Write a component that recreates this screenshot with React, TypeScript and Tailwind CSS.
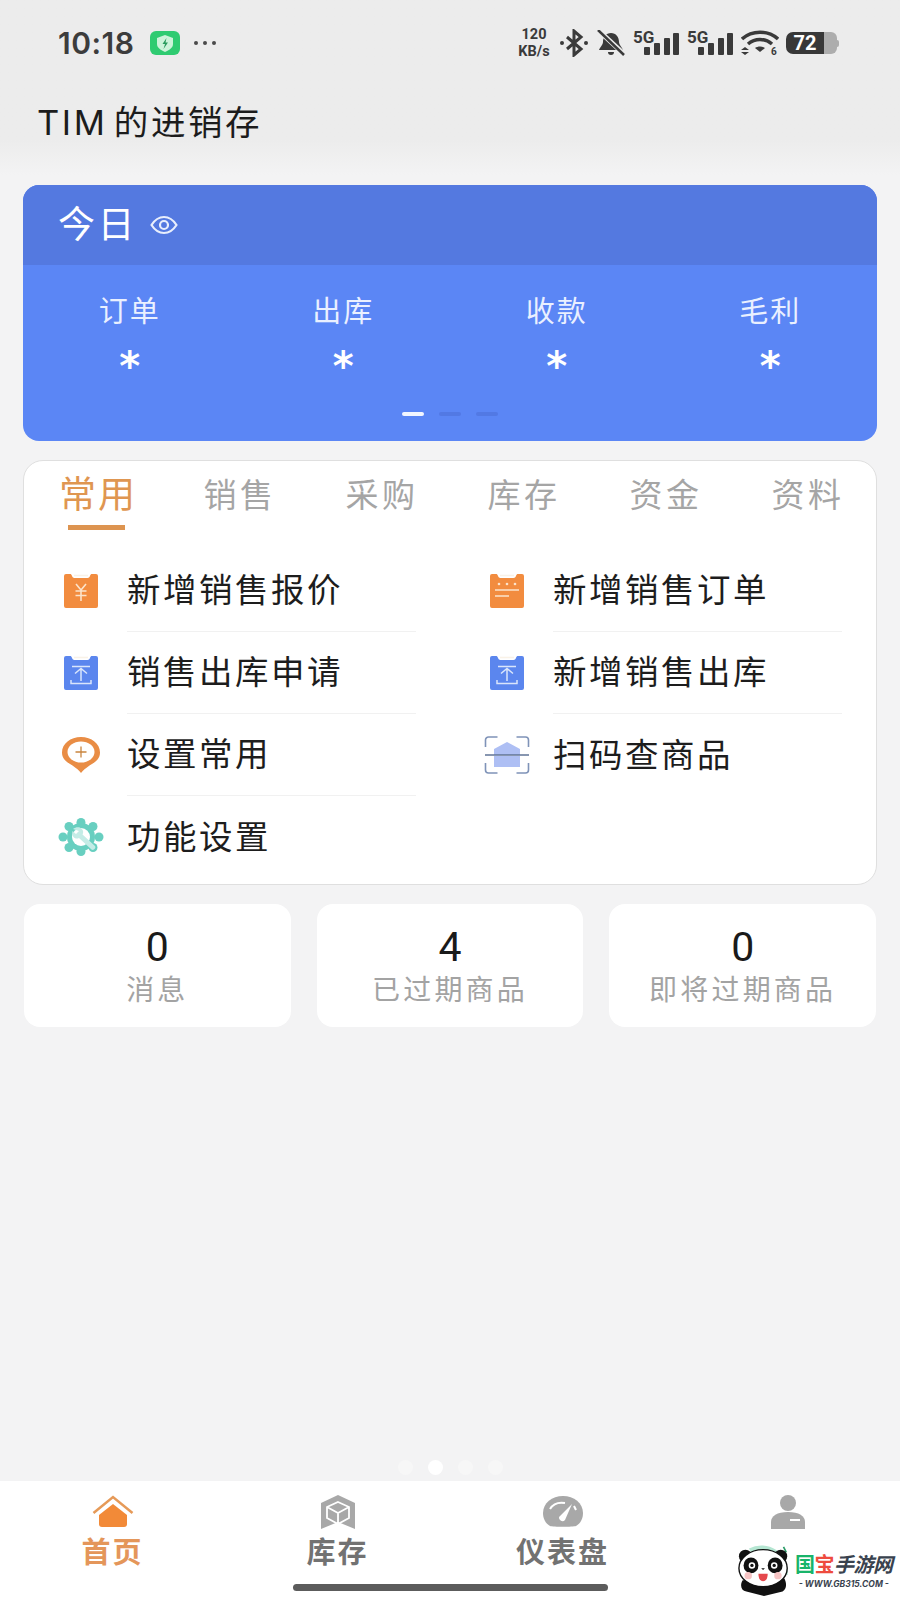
import React from "react";

const cjk = "font-['Inter','Noto_Sans_CJK_SC',sans-serif]";

const tabs = ["常用", "销售", "采购", "库存", "资金", "资料"];
const today = ["订单", "出库", "收款", "毛利"];

const ClipBoard: React.FC<{ color: string; children: React.ReactNode }> = ({ color, children }) => (
  <svg width="36" height="36" viewBox="0 0 36 36">
    <path d="M1 3a2 2 0 0 1 2-2h4c1 0 1.500.6 2 2 .5 1.300 1.200 2 2.500 2h13c1.300 0 2-.7 2.500-2 .5-1.400 1-2 2-2h4a2 2 0 0 1 2 2v30a2 2 0 0 1-2 2H3a2 2 0 0 1-2-2z" fill={color} />
    <path d="M11 2.500h14" stroke="#f6ead8" strokeWidth="1.500" opacity=".6" />
    {children}
  </svg>
);

const YenIcon = () => (
  <ClipBoard color="#f28c3f">
    <path d="M13 11l5 6 5-6M12.500 18h11M12.500 22.500h11M18 17v11" stroke="#fbe3cb" strokeWidth="1.600" fill="none" />
  </ClipBoard>
);

const ListIcon = () => (
  <ClipBoard color="#f28c3f">
    <circle cx="10" cy="11" r="1.300" fill="#fbe3cb" />
    <circle cx="18" cy="11" r="1.300" fill="#fbe3cb" />
    <circle cx="26" cy="11" r="1.300" fill="#fbe3cb" />
    <path d="M6 17h24M6 23h14" stroke="#fbe3cb" strokeWidth="1.600" fill="none" />
  </ClipBoard>
);

const OutIcon = () => (
  <ClipBoard color="#5b86ee">
    <path d="M9 11.500h18M18 13v13M12 18.500l6-5 6 5M8 25v3.500h20V25" stroke="#d9e5fb" strokeWidth="1.500" fill="none" />
  </ClipBoard>
);

const PinIcon = () => (
  <svg width="38" height="36" viewBox="0 0 38 36">
    <path d="M19 36c-1.500-2.500-5-5-8.500-7.500C4.500 25 0 22 0 15.500 0 6.500 8.500 0 19 0s19 6.500 19 15.500c0 6.500-4.500 9.500-10.500 13C24 31 20.500 33.500 19 36z" fill="#e98d45" />
    <ellipse cx="19" cy="15" rx="13.500" ry="10.500" fill="#fff" />
    <path d="M19 9.500v11M13.500 15h11" stroke="#c9853f" strokeWidth="1.300" />
  </svg>
);

const ScanIcon = () => (
  <svg width="46" height="38" viewBox="0 0 46 38">
    <path d="M1.500 11V4a3 3 0 0 1 3-3h9M32.500 1h9a3 3 0 0 1 3 3v7M1.500 27v7a3 3 0 0 0 3 3h9M32.500 37h9a3 3 0 0 0 3-3v-7" fill="none" stroke="#7f93b8" strokeWidth="1.600" />
    <path d="M10 13l13-7 13 7v6H10zM10 20h26v11H10z" fill="#aebff4" />
    <path d="M1 19h44" stroke="#5f7396" strokeWidth="1.400" />
  </svg>
);

const GearIcon = () => (
  <svg width="46" height="38" viewBox="0 0 46 38">
    <g fill="#68cfc0">
      <circle cx="23" cy="19" r="14" />
      <circle cx="23" cy="4.500" r="4.500" />
      <circle cx="23" cy="33.500" r="4.500" />
      <circle cx="5" cy="19" r="4.500" />
      <circle cx="41" cy="19" r="4.500" />
      <circle cx="11" cy="8.500" r="4.500" />
      <circle cx="35" cy="8.500" r="4.500" />
      <circle cx="11" cy="29.500" r="4.500" />
      <circle cx="35" cy="29.500" r="4.500" />
    </g>
    <circle cx="23" cy="19" r="9" fill="#fff" />
    <path d="M15 11c3-2.500 7-2.500 9 0 1.500 2 1.500 3.500.5 5.500L37 28c1.500 2-1.500 5-3.500 3.500L21 20c-2 1-4.500.5-5.500-1-1.500-2-1.500-4-1-6l3.500 3 3-3z" fill="#c4ece6" />
  </svg>
);

const actions = [
  { label: "新增销售报价", icon: <YenIcon />, line: true },
  { label: "新增销售订单", icon: <ListIcon />, line: true },
  { label: "销售出库申请", icon: <OutIcon />, line: true },
  { label: "新增销售出库", icon: <OutIcon />, line: true },
  { label: "设置常用", icon: <PinIcon />, line: true },
  { label: "扫码查商品", icon: <ScanIcon />, line: false },
  { label: "功能设置", icon: <GearIcon />, line: false },
];

const stats = [
  { value: "0", label: "消息" },
  { value: "4", label: "已过期商品" },
  { value: "0", label: "即将过期商品" },
];

const Signal = () => (
  <div className="flex w-[47px] items-start">
    <span className="-mr-[10px] text-[17px] leading-[13px] font-bold text-[#3a3a3a] font-['Roboto',sans-serif]">5G</span>
    <svg width="35" height="22" viewBox="0 0 35 22" className="mt-[2px]">
      <g fill="#3a3a3a">
        <rect x="0" y="14" width="6" height="8" rx="1" />
        <rect x="10" y="10" width="6" height="12" rx="1" />
        <rect x="20" y="5" width="6" height="17" rx="1" />
        <rect x="29" y="0" width="6" height="22" rx="1" />
      </g>
    </svg>
  </div>
);

const StatusBar = () => (
  <div className="flex h-[86px] items-center justify-between pl-[58px] pr-[61px]">
    <div className="flex items-center">
      <span className="w-[92px] text-[30px] font-semibold tracking-[0.5px] text-[#3c3c3c] font-['Inter',sans-serif]">10:18</span>
      <svg width="30" height="24" viewBox="0 0 30 24">
        <rect width="30" height="24" rx="6" fill="#2fcb71" />
        <path d="M15 4l8 3v6c0 4-4 6-8 8-4-2-8-4-8-8V7z" fill="#cdf3da" />
        <path d="M16.500 7l-4 6h2.500l-1.500 5 4.500-6.500h-2.500z" fill="#2a9b5d" />
      </svg>
      <div className="ml-[14px] flex gap-[5px]">
        <span className="h-[4px] w-[4px] rounded-full bg-[#4a4a4a]" />
        <span className="h-[4px] w-[4px] rounded-full bg-[#4a4a4a]" />
        <span className="h-[4px] w-[4px] rounded-full bg-[#4a4a4a]" />
      </div>
    </div>
    <div className="flex items-center gap-[7px]">
      <div className="flex w-[36px] flex-col items-center leading-none font-bold text-[#3a3a3a] font-['Roboto',sans-serif]">
        <span className="text-[14.500px] leading-[17px]">120</span>
        <span className="text-[14.500px] leading-[17px]">KB/s</span>
      </div>
      <svg width="30" height="28" viewBox="0 0 30 28">
        <path d="M8 8l14 12-7 6V2l7 6L8 20" fill="none" stroke="#3a3a3a" strokeWidth="3" />
        <circle cx="3" cy="14" r="2" fill="#3a3a3a" />
        <circle cx="27" cy="14" r="2" fill="#3a3a3a" />
      </svg>
      <svg width="30" height="26" viewBox="0 0 30 26">
        <path d="M15 3c5 0 8 4 8 9 0 3 3 5 4 8H3c1-3 4-5 4-8 0-5 3-9 8-9z" fill="#3a3a3a" />
        <path d="M12 22h6a3 3 0 0 1-6 0z" fill="#3a3a3a" />
        <path d="M3 1l25 23" stroke="#ececec" strokeWidth="5" />
        <path d="M2 0l26 25" stroke="#3a3a3a" strokeWidth="2.500" />
      </svg>
      <Signal />
      <Signal />
      <svg width="38" height="26" viewBox="0 0 38 26">
        <path d="M1 9c10-9 26-9 36 0M7 14c7-6 17-6 24 0" fill="none" stroke="#3a3a3a" strokeWidth="3.500" />
        <path d="M14 18c3-2 7-2 10 0l-5 4z" fill="#3a3a3a" />
        <path d="M0 20l4-3 4 3zM0 22l4 3 4-3z" fill="#3a3a3a" />
        <text x="30" y="25" fontSize="10" fontWeight="700" fill="#3a3a3a" fontFamily="Roboto, sans-serif">6</text>
      </svg>
      <div className="flex items-center">
        <div className="flex h-[22px] w-[38px] items-center justify-center rounded-l-[7px] bg-[#383838] text-[20px] font-bold text-white font-['Roboto',sans-serif]">72</div>
        <div className="h-[22px] w-[13px] rounded-r-[6px] bg-[#adadad]" />
        <div className="h-[7px] w-[2px] rounded-r-sm bg-[#adadad]" />
      </div>
    </div>
  </div>
);

const Panda = () => (
  <svg width="54" height="52" viewBox="0 0 58 56" className="shrink-0">
    <path d="M14 6a26 26 0 0 1 38 26" fill="none" stroke="#b5e6d2" strokeWidth="5" />
    <path d="M50 2l3 6M4 20l3 5" stroke="#2f9d6b" strokeWidth="1.800" />
    <circle cx="9" cy="12" r="7" fill="#111" />
    <circle cx="47" cy="12" r="7" fill="#111" />
    <path d="M6 38c-3 5-2 11 4 12l19 5 20-5c4-2 5-8 2-14z" fill="#111" />
    <ellipse cx="28" cy="25" rx="26" ry="20" fill="#fff" stroke="#111" strokeWidth="1.500" />
    <ellipse cx="15" cy="22" rx="8" ry="8.500" fill="#111" />
    <ellipse cx="41" cy="22" rx="8" ry="8.500" fill="#111" />
    <circle cx="16" cy="22" r="3.500" fill="#fff" />
    <circle cx="40" cy="22" r="3.500" fill="#fff" />
    <circle cx="16" cy="22" r="1.800" fill="#111" />
    <circle cx="40" cy="22" r="1.800" fill="#111" />
    <circle cx="12" cy="33" r="4" fill="#f6c4c4" />
    <circle cx="44" cy="33" r="4" fill="#f6c4c4" />
    <path d="M26 25h4l-2 2z" fill="#111" />
    <path d="M23 31h10c0 5-2 8-5 8s-5-3-5-8z" fill="#e5484d" />
  </svg>
);

const App: React.FC = () => {
  return (
    <div className={`relative flex h-[1600px] w-[900px] flex-col overflow-hidden bg-[#f3f3f4] ${cjk}`}>
      <div className="h-[175px] bg-gradient-to-b from-[#ececec] from-80% to-[#f3f3f4]">
        <StatusBar />
        <h1 className="pl-[37px] pt-[15px] text-[34.500px] leading-[44px] tracking-[2.600px] text-[#1c1c1c] [word-spacing:-6px]">TIM 的进销存</h1>
      </div>

      <section className="mx-[23px] mt-[10px] h-[256px] overflow-hidden rounded-[16px] bg-[#5b86f5] text-white">
        <div className="flex h-[80px] items-center gap-[13px] bg-[#5479e0] pl-[35px]">
          <span className="text-[37px] tracking-[2.500px]">今日</span>
          <svg width="28" height="20" viewBox="0 0 28 20" fill="none" stroke="#e8eefc" strokeWidth="2.200">
            <path d="M1.500 10C5 4.500 9 2 14 2s9 2.500 12.500 8C23 15.500 19 18 14 18S5 15.500 1.500 10z" />
            <circle cx="14" cy="10" r="4" />
          </svg>
        </div>
        <div className="grid grid-cols-4 pt-[27px]">
          {today.map((item) => (
            <div key={item} className="flex flex-col items-center">
              <span className="text-[29px] leading-[40px] tracking-[2px] text-[#eaf0ff]">{item}</span>
              <span className="mt-[9px] text-[40px] leading-[50px] font-bold font-['DejaVu_Sans',sans-serif]">*</span>
            </div>
          ))}
        </div>
        <div className="mt-[21px] flex justify-center gap-[15px]">
          <span className="h-[4px] w-[22px] rounded-full bg-[#f2f6ff]" />
          <span className="h-[4px] w-[22px] rounded-full bg-[#5279e4]" />
          <span className="h-[4px] w-[22px] rounded-full bg-[#5279e4]" />
        </div>
      </section>

      <section className="mx-[23px] mt-[19px] h-[425px] rounded-[20px] border border-[#dfdfdf] bg-white">
        <div className="-mr-[3px] grid h-[89px] grid-cols-6 pl-[3px]">
          {tabs.map((tab, i) => (
            <div key={tab} className="flex flex-col items-center pt-[10px]">
              <span className={i === 0 ? "text-[37px] leading-[48px] tracking-[2px] text-[#df9651]" : "text-[33px] leading-[48px] tracking-[3.500px] text-[#a5a5a5]"}>
                {tab}
              </span>
              {i === 0 && <span className="mt-[6px] h-[5px] w-[57px] -translate-x-[2px] bg-[#dd9450]" />}
            </div>
          ))}
        </div>
        <div className="grid grid-cols-2">
          {actions.map((action) => (
            <div key={action.label} className="flex h-[82px]">
              <div className="-mr-[11px] flex w-[114px] shrink-0 items-center justify-center">{action.icon}</div>
              <div className={`mr-[34px] flex flex-1 items-center text-[33.500px] tracking-[2.500px] text-[#1d1d1d] ${action.line ? "border-b border-[#f1f1f1]" : ""}`}>
                {action.label}
              </div>
            </div>
          ))}
        </div>
      </section>

      <section className="mx-[24px] mt-[19px] grid h-[123px] grid-cols-3 gap-[26px]">
        {stats.map((stat) => (
          <div key={stat.label} className="flex flex-col items-center rounded-[16px] bg-white pt-[19px]">
            <span className="text-[41px] leading-[48px] text-[#1a1a1a] font-['Roboto',sans-serif]">{stat.value}</span>
            <span className="mt-[1px] text-[28px] leading-[36px] tracking-[3.200px] text-[#a3a3a3]">{stat.label}</span>
          </div>
        ))}
      </section>

      <div className="flex flex-1 items-end justify-center gap-[15px] pb-[6px]">
        <span className="h-[15px] w-[15px] rounded-full bg-[#f7f7f7]" />
        <span className="h-[15px] w-[15px] rounded-full bg-white" />
        <span className="h-[15px] w-[15px] rounded-full bg-[#f7f7f7]" />
        <span className="h-[15px] w-[15px] rounded-full bg-[#f7f7f7]" />
      </div>

      <nav className="grid h-[119px] grid-cols-4 bg-white pt-[14px]">
        <div className="flex flex-col items-center">
          <svg width="42" height="34" viewBox="0 0 42 34">
            <path d="M1.500 18L21 2l19.500 16" fill="none" stroke="#e69a58" strokeWidth="2.500" />
            <path d="M21 9l14 11v9a3 3 0 0 1-3 3H10a3 3 0 0 1-3-3v-9z" fill="#f28a38" />
          </svg>
          <span className="mt-[4px] text-[29px] leading-[40px] font-semibold tracking-[2px] text-[#e4965a]">首页</span>
        </div>
        <div className="flex flex-col items-center">
          <svg width="36" height="34" viewBox="0 0 36 34">
            <path d="M18 0l17 8v26l-17-7-17 7V8z" fill="#a8a8a8" />
            <path d="M18 7l11 5v11l-11 6-11-6V12zM7 12l11 6 11-6M18 18v11" fill="none" stroke="#fff" strokeWidth="1.800" />
          </svg>
          <span className="mt-[4px] text-[29px] leading-[40px] font-semibold tracking-[2px] text-[#727272]">库存</span>
        </div>
        <div className="flex flex-col items-center">
          <svg width="42" height="34" viewBox="0 0 42 34">
            <path d="M8 31C3 28 1 23 1 18 1 8 10 1 21 1s20 7 20 17c0 5-2 10-7 13-3 1-23 1-26 0z" fill="#a8a8a8" />
            <path d="M8 14c3-5 9-7 15-6M32 11l2 4" fill="none" stroke="#fff" strokeWidth="2" />
            <path d="M30 9L23 25a3.500 3.500 0 0 1-6-3z" fill="#fff" />
          </svg>
          <span className="mt-[4px] text-[29px] leading-[40px] font-semibold tracking-[2px] text-[#727272]">仪表盘</span>
        </div>
        <div className="flex flex-col items-center">
          <svg width="36" height="34" viewBox="0 0 36 34">
            <ellipse cx="18" cy="8" rx="8" ry="8" fill="#a8a8a8" />
            <path d="M1 34V27C1 21 7 17 18 17s17 4 17 10v7z" fill="#a8a8a8" />
            <path d="M20 25h10" stroke="#fff" strokeWidth="2" />
          </svg>
        </div>
      </nav>

      <div className="absolute bottom-[9px] left-[293px] h-[7px] w-[315px] rounded-full bg-[#5c5c5c]" />

      <div className="absolute bottom-0 right-0 flex h-[65px] w-[178px] items-center gap-[4px] bg-white pl-[15px] pt-[6px]">
        <Panda />
        <div className="flex flex-col items-center">
          <span className="text-[20px] leading-[26px] font-bold tracking-[-0.500px] whitespace-nowrap">
            <span className="text-[#18b46a]">国</span>
            <span className="text-[#ee4b3e]">宝</span>
            <span className="italic text-[#39424e]">手游网</span>
          </span>
          <span className="text-[8.500px] leading-[12px] font-bold italic whitespace-nowrap text-[#39424e]">- WWW.GB315.COM -</span>
        </div>
      </div>
    </div>
  );
};

export default App;
